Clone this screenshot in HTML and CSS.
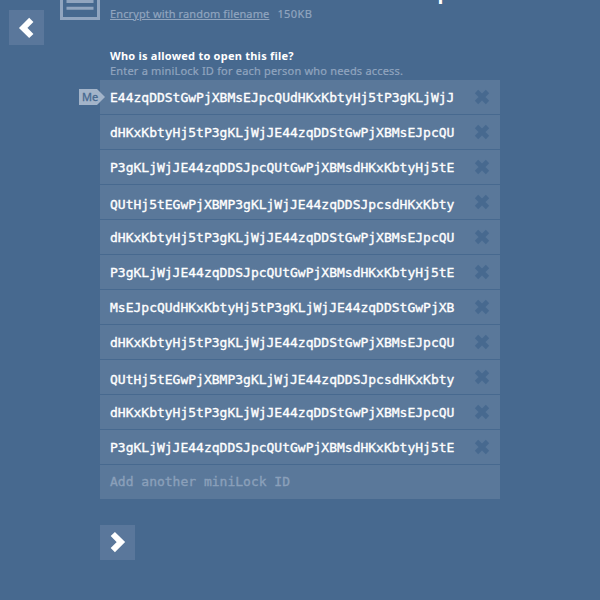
FILE: index.html
```html
<!DOCTYPE html>
<html lang="en">
<head>
<meta charset="utf-8">
<title>miniLock</title>
<link rel="stylesheet" href="styles.css">
</head>
<body>
<div class="screen">
  <aside class="side"><button class="square" aria-label="Back"><svg viewBox="0 0 35 35"><path d="m22.300 9.800-8.100 8.100 8.100 8.100"/></svg></button></aside>
  <svg class="file-icon" viewBox="0 0 40 60"><path d="M1.500-20h37v78.500h-37zM6.500 41.500h27M6.500 48.300h27"/></svg>
  <main class="content">
    <header class="file">
      <h1>Committee Minutes from Jun 16.pdf<span class="suffix">.minilock</span></h1>
      <p class="meta"><a>Encrypt with random filename</a><span class="size">150KB</span></p>
    </header>
    <h2>Who is allowed to open this file?</h2>
    <p class="hint">Enter a miniLock ID for each person who needs access.</p>
    <div class="list">
      <div class="row"><b class="me"><span>Me</span></b><span class="id">E44zqDDStGwPjXBMsEJpcQUdHKxKbtyHj5tP3gKLjWjJ</span><svg class="x" viewBox="0 0 16 16"><path d="m2.500 2.500 11 11m0-11-11 11"/></svg></div>
      <div class="row"><span class="id">dHKxKbtyHj5tP3gKLjWjJE44zqDDStGwPjXBMsEJpcQU</span><svg class="x" viewBox="0 0 16 16"><path d="m2.500 2.500 11 11m0-11-11 11"/></svg></div>
      <div class="row"><span class="id">P3gKLjWjJE44zqDDSJpcQUtGwPjXBMsdHKxKbtyHj5tE</span><svg class="x" viewBox="0 0 16 16"><path d="m2.500 2.500 11 11m0-11-11 11"/></svg></div>
      <div class="row low"><span class="id">QUtHj5tEGwPjXBMP3gKLjWjJE44zqDDSJpcsdHKxKbty</span><svg class="x" viewBox="0 0 16 16"><path d="m2.500 2.500 11 11m0-11-11 11"/></svg></div>
      <div class="row"><span class="id">dHKxKbtyHj5tP3gKLjWjJE44zqDDStGwPjXBMsEJpcQU</span><svg class="x" viewBox="0 0 16 16"><path d="m2.500 2.500 11 11m0-11-11 11"/></svg></div>
      <div class="row"><span class="id">P3gKLjWjJE44zqDDSJpcQUtGwPjXBMsdHKxKbtyHj5tE</span><svg class="x" viewBox="0 0 16 16"><path d="m2.500 2.500 11 11m0-11-11 11"/></svg></div>
      <div class="row"><span class="id">MsEJpcQUdHKxKbtyHj5tP3gKLjWjJE44zqDDStGwPjXB</span><svg class="x" viewBox="0 0 16 16"><path d="m2.500 2.500 11 11m0-11-11 11"/></svg></div>
      <div class="row"><span class="id">dHKxKbtyHj5tP3gKLjWjJE44zqDDStGwPjXBMsEJpcQU</span><svg class="x" viewBox="0 0 16 16"><path d="m2.500 2.500 11 11m0-11-11 11"/></svg></div>
      <div class="row low"><span class="id">QUtHj5tEGwPjXBMP3gKLjWjJE44zqDDSJpcsdHKxKbty</span><svg class="x" viewBox="0 0 16 16"><path d="m2.500 2.500 11 11m0-11-11 11"/></svg></div>
      <div class="row"><span class="id">dHKxKbtyHj5tP3gKLjWjJE44zqDDStGwPjXBMsEJpcQU</span><svg class="x" viewBox="0 0 16 16"><path d="m2.500 2.500 11 11m0-11-11 11"/></svg></div>
      <div class="row"><span class="id">P3gKLjWjJE44zqDDSJpcQUtGwPjXBMsdHKxKbtyHj5tE</span><svg class="x" viewBox="0 0 16 16"><path d="m2.500 2.500 11 11m0-11-11 11"/></svg></div>
      <div class="row add"><span class="id">Add another miniLock ID</span></div>
    </div>
    <button class="square next" aria-label="Next"><svg viewBox="0 0 35 35"><path d="m12.800 9 8.100 8.100-8.100 8.100"/></svg></button>
  </main>
</div>
</body>
</html>
```
FILE: styles.css
```css
* { box-sizing: border-box; margin: 0; padding: 0; }
body { background: #47698f; color: #fff; font: 11px/15px "Noto Sans", sans-serif; overflow: hidden; }
.screen { display: flex; height: 600px; overflow: hidden; }
.side { width: 60px; padding: 10px 0 0 9px; }
.square { display: block; width: 35px; height: 35px; border: 0; background: #5a779b; }
.square svg { display: block; fill: none; stroke: #fff; stroke-width: 6; }
.file-icon { width: 40px; height: 60px; margin-top: -40px; fill: none; stroke: #91a5bf; stroke-width: 3; }
.content { width: 400px; margin-top: -24px; }
.file { height: 72px; padding-left: 10px; }
h1 { height: 30px; font: 700 20px/34px Inter, sans-serif; letter-spacing: .42px; white-space: nowrap; }
.suffix { color: #91a5bf; letter-spacing: 0; }
.meta { display: flex; color: #91a5bf; letter-spacing: .12px; -webkit-text-stroke: .2px currentColor; }
.meta a { text-decoration: underline; }
.size { margin-left: 8px; letter-spacing: .4px; }
h2 { padding-left: 10px; font-size: 11px; line-height: 15px; letter-spacing: .24px; }
.hint { padding-left: 10px; line-height: 15px; height: 17px; color: #91a5bf; letter-spacing: .19px; -webkit-text-stroke: .2px currentColor; }
.row { position: relative; display: flex; align-items: center; height: 34px; margin-bottom: 1px; padding: 0 10px; background: #5a789a; }
.id { width: 344px; padding-top: 2px; font: 13px/18px "DejaVu Sans Mono", monospace; -webkit-text-stroke: .35px currentColor; white-space: pre; }
.low .id { padding-top: 5px; }
.x { width: 16px; height: 16px; margin-left: 20px; fill: none; stroke: #47698f; stroke-width: 4.800; }
.add { color: #8ba0ba; }
.add .id { padding-top: 0; }
.me { position: absolute; left: -21px; top: 9px; width: 26px; height: 16px; padding-left: 3px; background: #a3b4c9; color: #47698f; font-weight: 400; line-height: 16px; -webkit-text-stroke: .3px currentColor; clip-path: polygon(0 0, 18px 0, 100% 50%, 18px 100%, 0 100%); }
.next { margin-top: 26px; }
```
